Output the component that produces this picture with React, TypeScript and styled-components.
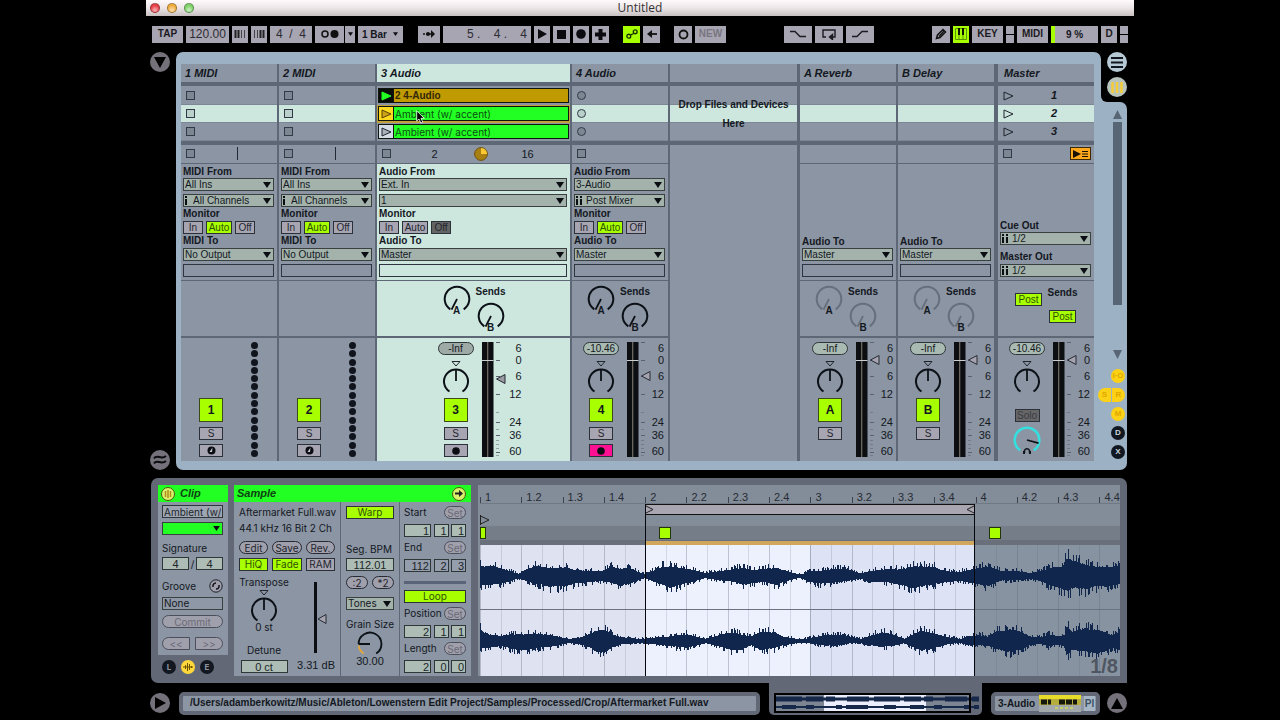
import React from 'react';
import styled, { createGlobalStyle } from 'styled-components';

const c = {
  ink: '#14181f',
  grey: '#8b95a3',
  line: '#5e6776',
  mint: '#cde7df',
  field: '#a3b2ab',
  button: '#a8a5b2',
  lime: '#a8ff00',
  green: '#22ff22',
  frame: '#9cb1c3',
  panel: '#626876',
  yellow: '#fdd116',
};

const Global = createGlobalStyle`
  * { box-sizing: border-box; }
  body { margin: 0; background: #000; color: ${c.ink}; font: 10px/12px "Liberation Sans", Arial, sans-serif; }
  button, input, select { font: inherit; color: inherit; margin: 0; padding: 0; border-radius: 0; }
  button { cursor: default; }
  svg { display: block; flex: none; }
`;

const Page = styled.div`
  min-height: 100vh;
  padding: 0 146px;
  overflow: hidden;
`;

/* ---------- title bar ---------- */
const TitleBar = styled.header`
  height: 16px;
  display: grid;
  grid-template-columns: 1fr auto 1fr;
  align-items: center;
  background: linear-gradient(#fffafb, #ece6e8 50%, #c6c0c1);
  font: 12px/14px "Open Sans", "Noto Sans", sans-serif;
  color: #333;
`;
const Lights = styled.div`
  display: flex;
  gap: 7px;
  padding-left: 4px;
`;
const Light = styled.button<{ $c: string }>`
  width: 10px;
  height: 10px;
  border-radius: 5px;
  border: 1px solid #0005;
  background: radial-gradient(circle at 50% 75%, #fff9, transparent 60%), ${(p) => p.$c};
`;

/* ---------- transport ---------- */
const Transport = styled.nav`
  display: flex;
  align-items: center;
  height: 36px;
  padding: 0 6px;
`;
const Group = styled.div<{ $gap?: number }>`
  display: flex;
  gap: 3px;
  margin-left: ${(p) => p.$gap ?? 0}px;
`;
const Spacer = styled.div`
  flex: 1;
`;
const TBtn = styled.button<{ $w: number; $on?: boolean; $dim?: boolean }>`
  width: ${(p) => p.$w}px;
  height: 17px;
  border: 0;
  display: flex;
  align-items: center;
  justify-content: center;
  background: ${(p) => (p.$on ? c.lime : c.button)};
  color: ${(p) => (p.$dim ? '#77757f' : '#1b1b22')};
  font-weight: bold;
`;
const TInput = styled.input<{ $w: number; $right?: boolean }>`
  width: ${(p) => p.$w}px;
  height: 17px;
  border: 0;
  background: ${c.button};
  color: #2b2b33;
  font-size: 12px;
  text-align: ${(p) => (p.$right ? 'right' : 'center')};
  padding-right: ${(p) => (p.$right ? 4 : 0)}px;
  white-space: pre;
`;
const TSelect = styled.label<{ $w: number }>`
  display: flex;
  align-items: center;
  width: ${(p) => p.$w}px;
  height: 17px;
  padding: 0 5px 0 4px;
  background: ${c.button};
  font-weight: bold;
`;
const BareSelect = styled.select`
  appearance: none;
  border: 0;
  background: transparent;
  flex: 1;
  min-width: 0;
  width: 0;
  height: 100%;
  line-height: 11px;
  outline: 0;
`;
const Split = styled.div`
  display: flex;
  gap: 1px;
`;
const MiniStack = styled.div`
  display: grid;
  gap: 1px;
  width: 8px;
  height: 17px;
`;
const MiniLed = styled.span`
  background: ${c.button};
`;
const Cpu = styled.div`
  display: flex;
  width: 47px;
  height: 17px;
  background: ${c.button};
  font-weight: bold;
`;
const CpuBar = styled.span`
  width: 4px;
  background: ${c.lime};
`;
const CpuText = styled.span`
  flex: 1;
  padding-right: 4px;
  text-align: center;
  line-height: 17px;
`;

/* ---------- session ---------- */
const Session = styled.main`
  display: flex;
  height: 418px;
  padding-right: 7px;
`;
const Gutter = styled.aside`
  width: 30px;
  padding: 0 0 0 4px;
  display: flex;
  flex-direction: column;
  justify-content: space-between;
`;
const RoundBtn = styled.button<{ $bg?: string }>`
  width: 20px;
  height: 20px;
  flex: none;
  border: 0;
  border-radius: 10px;
  background: ${(p) => p.$bg ?? '#74717a'};
  display: flex;
  align-items: center;
  justify-content: center;
`;
const Frame = styled.section`
  flex: 1;
  min-width: 0;
  background: ${c.frame};
  border-radius: 7px 7px 0 7px;
  padding: 12px 7px 9px 5px;
`;
const Tracks = styled.div`
  display: grid;
  grid-template-columns: 96px 96px 193px 96px 1fr 97px 96px 98px;
  gap: 2px;
  background: ${c.line};
  height: 397px;
`;
const Track = styled.section<{ $edge?: number }>`
  display: flex;
  flex-direction: column;
  position: relative;
  border-left: ${(p) => p.$edge ?? 0}px solid ${c.line};
  min-width: 0;
`;
const Header = styled.h2<{ $sel?: boolean; $pad?: number }>`
  margin: 0 0 4px;
  height: 18px;
  padding-left: ${(p) => p.$pad ?? 4}px;
  font: italic bold 11px/18px "Liberation Sans", sans-serif;
  background: ${(p) => (p.$sel ? c.mint : c.grey)};
`;
const Slots = styled.div`
  padding-top: 1px;
  height: 55px;
  background: ${c.grey};
  margin-bottom: 4px;
`;
const Slot = styled.div<{ $hot?: boolean }>`
  height: 18px;
  display: flex;
  align-items: center;
  padding-left: 5px;
  background: ${(p) => (p.$hot ? c.mint : c.grey)};
  border-bottom: 1px solid #7c8694;
`;
const StopBtn = styled.button<{ $round?: boolean; $after?: number }>`
  width: 9px;
  height: 9px;
  margin-right: ${(p) => p.$after ?? 0}px;
  border: 1px solid #333a47;
  background: #00000018;
  border-radius: ${(p) => (p.$round ? 5 : 0)}px;
`;
const ClipSlot = styled.div<{ $hot?: boolean }>`
  height: 18px;
  padding: 1px 1px 2px;
  display: flex;
  background: ${(p) => (p.$hot ? '#c2a03a' : c.grey)};
`;
const Launch = styled.button<{ $bg: string }>`
  width: 15px;
  border: 1px solid #10140f;
  border-right: 0;
  background: ${(p) => p.$bg};
  display: flex;
  align-items: center;
  justify-content: center;
`;
const ClipName = styled.button<{ $bg: string; $bold?: boolean }>`
  flex: 1;
  border: 1px solid #10140f;
  background: ${(p) => p.$bg};
  text-align: left;
  padding-left: 1px;
  line-height: 12px;
  font-family: ${(p) => (p.$bold ? 'inherit' : 'Inter, "Liberation Sans", sans-serif')};
  font-weight: ${(p) => (p.$bold ? 'bold' : 'normal')};
  color: ${(p) => (p.$bold ? '#33270a' : '#0b4d12')};
`;
const StopRow = styled.div`
  height: 18px;
  margin-bottom: 1px;
  padding: 0 3px 1px 5px;
  display: flex;
  align-items: center;
  background: ${c.grey};
  justify-content: space-between;
`;
const Playhead = styled.span`
  width: 1px;
  height: 13px;
  background: #222935;
  margin-right: 36px;
`;
const LoopCount = styled.span`
  width: 24px;
  text-align: center;
  font-size: 11px;
`;
const IO = styled.div<{ $sel?: boolean; $end?: boolean }>`
  height: 116px;
  margin-bottom: 1px;
  padding: 1px 3px 3px 2px;
  display: flex;
  flex-direction: column;
  justify-content: ${(p) => (p.$end ? 'flex-end' : 'flex-start')};
  background: ${(p) => (p.$sel ? c.mint : c.grey)};
`;
const IOLabel = styled.label`
  font-weight: bold;
  line-height: 14px;
  height: 14px;
  flex: none;
  &:first-child { height: 13px; }
`;
const SelectBox = styled.div<{ $gap?: number; $top?: number; $bg?: string }>`
  display: flex;
  align-items: center;
  height: 13px;
  flex: none;
  margin-top: ${(p) => p.$top ?? 0}px;
  margin-bottom: ${(p) => p.$gap ?? 0}px;
  padding: 0 2px 0 1px;
  border: 1px solid #39403f;
  background: ${(p) => p.$bg ?? c.field};
  gap: 4px;
`;
const Blank = styled.div`
  height: 13px;
  border: 1px solid #2e3440;
  flex: none;
`;
const Monitor = styled.div`
  display: flex;
  gap: 3px;
  height: 13px;
`;
const Toggle = styled.button<{ $w?: number; $on?: boolean; $bg?: string; $fg?: string }>`
  width: ${(p) => (p.$w ? p.$w + 'px' : '100%')};
  height: 13px;
  flex: none;
  border: 1px solid #2c3038;
  background: ${(p) => p.$bg ?? (p.$on ? c.lime : c.button)};
  color: ${(p) => p.$fg ?? (p.$on ? '#2f5200' : '#23262e')};
  line-height: 11px;
  display: flex;
  align-items: center;
  justify-content: center;
`;
const Sends = styled.div<{ $sel?: boolean }>`
  height: 55px;
  margin-bottom: 2px;
  background: ${(p) => (p.$sel ? c.mint : c.grey)};
`;
const SendGrid = styled.div<{ $wide?: boolean }>`
  width: 96px;
  margin: 0 auto;
  padding: 4px 0 0 ${(p) => (p.$wide ? 17 : 15)}px;
  display: flex;
  gap: 6px;
`;
const SendCol = styled.div`
  display: flex;
  flex-direction: column;
  align-items: center;
  gap: 4px;
  width: 28px;
`;
const SendTitle = styled.span`
  font-weight: bold;
  line-height: 13px;
`;
const KnobBox = styled.div`
  position: relative;
  width: 28px;
  height: 28px;
`;
const KnobLetter = styled.span`
  position: absolute;
  left: 0;
  right: 0;
  bottom: -4px;
  text-align: center;
  font-weight: bold;
`;
const PostGrid = styled.div`
  display: flex;
  padding: 5px 18px 0 0;
  justify-content: flex-end;
  gap: 7px;
`;
const PostCol = styled.div<{ $top: number }>`
  padding-top: ${(p) => p.$top}px;
  width: 27px;
  display: flex;
  flex-direction: column;
  gap: 11px;
  align-items: center;
`;
const Mixer = styled.div<{ $sel?: boolean }>`
  height: 123px;
  background: ${(p) => (p.$sel ? c.mint : c.grey)};
`;
const Strip = styled.div<{ $pad?: number }>`
  width: 96px;
  margin: 0 auto;
  padding: 4px 0 0 ${(p) => p.$pad ?? 11}px;
  display: flex;
`;
const StripLeft = styled.div`
  width: 36px;
  height: 115px;
  display: flex;
  flex-direction: column;
  align-items: center;
`;
const Pill = styled.output<{ $bg?: string }>`
  width: 36px;
  height: 13px;
  border: 1px solid #2e3638;
  border-radius: 7px;
  background: ${(p) => p.$bg ?? '#a9bab2'};
  line-height: 11px;
  text-align: center;
  margin-bottom: 5px;
  flex: none;
`;
const Activator = styled.button`
  width: 24px;
  height: 24px;
  margin: 4px 0 5px;
  flex: none;
  border: 1px solid #3c4a1a;
  background: ${c.lime};
  font-weight: bold;
  font-size: 12px;
`;
const Arm = styled(Toggle)`
  margin-top: 4px;
`;
const Solo = styled(Toggle)`
  margin: 15px 0 4px;
`;
const CueKnob = styled.div`
  position: relative;
`;
const Phones = styled.svg`
  position: absolute;
  left: 9px;
  bottom: 0;
`;
const Scale = styled.div<{ $wide?: boolean }>`
  display: grid;
  grid-template-rows: 12px 12px 16px 18px 28px 13px 16px;
  align-items: end;
  justify-items: end;
  width: ${(p) => (p.$wide ? 16 : 13)}px;
  font-size: 11px;
`;
const MeterGap = styled.div`
  width: 8px;
`;
const MidiLeft = styled(StripLeft)`
  padding-top: 52px;
`;
const Dots = styled.div`
  height: 115px;
  margin-left: 22px;
  display: flex;
  flex-direction: column;
  justify-content: space-between;
`;
const Dot = styled.i`
  width: 7px;
  height: 7px;
  border-radius: 4px;
  background: #10141c;
`;
const DropHint = styled.p`
  position: absolute;
  top: 31px;
  left: 0;
  right: 0;
  margin: 0;
  text-align: center;
  font-weight: bold;
  line-height: 19px;
`;
const DropBody = styled.div`
  flex: 1;
  background: ${c.grey};
`;
const SceneNo = styled.span`
  font: italic bold 11px/17px "Liberation Sans", sans-serif;
  margin: 0 auto;
`;
const BackBtn = styled.button`
  width: 21px;
  height: 13px;
  border: 1px solid #3d2a00;
  background: #ffa81c;
  display: flex;
  align-items: center;
  justify-content: center;
`;
const Cursor = styled.svg`
  position: absolute;
  left: 39px;
  top: 46px;
`;

/* ---------- right rail ---------- */
const Rail = styled.aside`
  width: 26px;
  display: flex;
  flex-direction: column;
`;
const NotchBack = styled.div`
  background: ${c.frame};
`;
const Notch = styled.div`
  height: 50px;
  background: #000;
  border-bottom-left-radius: 6px;
  display: flex;
  flex-direction: column;
  align-items: flex-end;
  gap: 5px;
`;
const RailBody = styled.div`
  flex: 1;
  background: ${c.frame};
  border-radius: 0 7px 7px 0;
  padding: 8px 2px 10px 0;
  display: flex;
  flex-direction: column;
  align-items: flex-end;
`;
const ScrollTrack = styled.div`
  height: 183px;
  width: 9px;
  margin: 3px 3px 45px 0;
  background: #586575;
`;
const ArrowCell = styled.div`
  width: 15px;
  display: flex;
  justify-content: center;
`;
const ShowBtns = styled.div`
  display: flex;
  flex-direction: column;
  align-items: flex-end;
  gap: 5px;
  margin-top: 10px;
`;
const ShowBtn = styled.button<{ $on?: boolean; $shape?: string }>`
  width: ${(p) => (p.$shape ? 13 : 14)}px;
  height: 14px;
  border: 0;
  border-radius: ${(p) => p.$shape ?? '7px'};
  background: ${(p) => (p.$on ? c.yellow : '#111821')};
  color: ${(p) => (p.$on ? '#e0a800' : '#c8d4de')};
  font-weight: bold;
  font-size: 8px;
  line-height: 14px;
  text-align: center;
  flex: none;
`;
const Pair = styled.div`
  display: flex;
  gap: 1px;
  margin-left: -4px;
`;

/* ---------- clip view ---------- */
const ClipView = styled.section`
  margin: 8px 7px 0 5px;
  height: 205px;
  padding: 7px;
  background: ${c.panel};
  border-radius: 7px 7px 0 7px;
  display: flex;
`;
const ClipCol = styled.div`
  width: 70px;
  margin-right: 6px;
  flex: none;
  font-family: Inter, "Liberation Sans", sans-serif;
`;
const GreenHead = styled.h2`
  margin: 0;
  height: 17px;
  padding: 0 5px 0 3px;
  display: flex;
  align-items: center;
  gap: 5px;
  background: ${c.green};
  color: #0c4413;
  font: italic bold 11px/17px "Liberation Sans", sans-serif;
`;
const HeadBtn = styled.button<{ $right?: boolean }>`
  width: 14px;
  height: 14px;
  border: 1px solid #4a5a10;
  border-radius: 7px;
  background: #d9f06a;
  margin-left: ${(p) => (p.$right ? 'auto' : '0')};
  display: flex;
  align-items: center;
  justify-content: center;
`;
const ClipBody = styled.div`
  height: 153px;
  padding: 3px 5px 0 4px;
  background: ${c.grey};
`;
const Stack = styled.div<{ $t?: number }>`
  display: flex;
  align-items: center;
  justify-content: space-between;
  margin-top: ${(p) => p.$t ?? 0}px;
`;
const Box = styled.input<{ $w?: number; $bg?: string; $align?: string }>`
  width: ${(p) => (p.$w ? p.$w + 'px' : '100%')};
  height: 13px;
  display: block;
  border: 1px solid #2e3638;
  background: ${(p) => p.$bg ?? '#adbdb5'};
  color: #20252a;
  text-align: ${(p) => p.$align ?? 'center'};
  padding: 0 1px;
  line-height: 11px;
`;
const NumBox = styled(Box)`
  font-family: "Liberation Sans", sans-serif;
  font-size: 11px;
`;
const Text = styled.label<{ $h?: number; $t?: number }>`
  display: block;
  line-height: ${(p) => p.$h ?? 13}px;
  margin-top: ${(p) => p.$t ?? 0}px;
  white-space: nowrap;
`;
const NumText = styled(Text)`
  font-family: "Liberation Sans", sans-serif;
  font-size: 11px;
`;
const PillBtn = styled.button<{ $w?: number; $dim?: boolean; $r?: string }>`
  width: ${(p) => (p.$w ? p.$w + 'px' : '100%')};
  height: 13px;
  flex: none;
  border: 1px solid ${(p) => (p.$dim ? '#4c4f5b' : '#262a33')};
  border-radius: ${(p) => p.$r ?? '7px'};
  background: #a09fac;
  color: ${(p) => (p.$dim ? '#6a6a76' : '#22252d')};
  line-height: 10px;
  text-align: center;
`;
const Tabs = styled.div`
  display: flex;
  gap: 5px;
  padding: 5px 0 0 4px;
`;
const Tab = styled.button<{ $on?: boolean }>`
  width: 14px;
  height: 14px;
  border: 0;
  border-radius: 7px;
  background: ${(p) => (p.$on ? '#ffd83a' : '#13171f')};
  color: #8e95a2;
  font-weight: bold;
  font-size: 8px;
  line-height: 14px;
  display: flex;
  align-items: center;
  justify-content: center;
`;
const SampleCol = styled.div`
  width: 237px;
  margin-right: 7px;
  flex: none;
  font-family: Inter, "Liberation Sans", sans-serif;
`;
const SampleBody = styled.div`
  height: 174px;
  display: grid;
  grid-template-columns: 106px 58px 1fr;
  gap: 1px;
  background: ${c.line};
`;
const Pane = styled.div<{ $p: string }>`
  background: ${c.grey};
  padding: ${(p) => p.$p};
  min-width: 0;
`;
const PitchRow = styled.div`
  display: flex;
  justify-content: space-between;
`;
const PitchCol = styled.div`
  width: 50px;
  display: flex;
  flex-direction: column;
  align-items: center;
`;
const GainCol = styled(PitchCol)`
  width: 40px;
  padding-top: 11px;
  align-items: flex-end;
`;
const Rule = styled.hr`
  margin: 9px 0 6px;
  height: 3px;
  border: 0;
  background: #596479;
`;
const Center = styled.div`
  display: flex;
  flex-direction: column;
  align-items: center;
`;

/* ---------- waveform display ---------- */
const Wave = styled.div`
  position: relative;
  flex: 1;
  min-width: 0;
  background: #838d99;
  padding-left: 2px;
  display: flex;
  flex-direction: column;
`;
const Ruler = styled.div`
  height: 19px;
  display: flex;
  border-bottom: 1px solid #6f7883;
  font-size: 11px;
`;
const Beat = styled.div<{ $half?: boolean }>`
  flex: ${(p) => (p.$half ? 1 : 2)} 0 0;
  min-width: 0;
  display: flex;
  gap: 4px;
  align-items: flex-end;
  color: #262b33;
`;
const Tick = styled.i`
  width: 1px;
  height: 6px;
  background: #3c434e;
`;
const Lane = styled.div<{ $h: number; $bg?: string }>`
  height: ${(p) => p.$h}px;
  display: grid;
  grid-template-columns: repeat(31, 1fr);
  background: ${(p) => p.$bg ?? 'transparent'};
`;
const Brace = styled.div`
  grid-column: 9 / 25;
  display: flex;
  align-items: center;
  justify-content: space-between;
  border: solid #111;
  border-width: 1px 0;
  background: #a9a6b2;
`;
const Orange = styled.div`
  grid-column: 9 / 25;
  background: #d0a75c;
  height: 4px;
  margin-top: 1px;
`;
const Marker = styled.i<{ $col: number; $cut?: boolean }>`
  grid-column: ${(p) => p.$col} / span 2;
  width: ${(p) => (p.$cut ? 6 : 12)}px;
  margin-left: ${(p) => (p.$cut ? 0 : 14)}px;
  height: 12px;
  margin-top: 1px;
  border: 1px solid #24340a;
  background: ${c.lime};
`;
const Overlay = styled.div`
  position: absolute;
  inset: 19px 0 0 2px;
  display: grid;
  grid-template-columns: repeat(31, 1fr);
  pointer-events: none;
`;
const LoopEdges = styled.div`
  grid-column: 9 / 25;
  border: solid #05070c;
  border-width: 0 1px;
`;
const GridText = styled.span`
  position: absolute;
  right: 2px;
  bottom: 0;
  font: bold 20px/20px "Liberation Sans", sans-serif;
  color: #4f5661;
`;
const WaveSvg = styled.svg`
  width: 100%;
  height: 131px;
`;

/* ---------- status bar ---------- */
const Status = styled.footer`
  display: flex;
  height: 32px;
  padding: 0 7px 0 4px;
`;
const Lowered = styled.div`
  padding-top: 10px;
`;
const PathBox = styled.div`
  flex: 1;
  min-width: 0;
  height: 23px;
  margin: 9px 9px 0;
  border: 4px solid ${c.panel};
  border-radius: 5px;
  background: ${c.grey};
  padding-left: 7px;
  font-weight: bold;
  line-height: 14px;
  white-space: nowrap;
  overflow: hidden;
`;
const OverviewTab = styled.div`
  width: 213px;
  background: ${c.panel};
  border-radius: 0 0 5px 5px;
  padding: 10px 3px 0 5px;
`;
const DeviceTab = styled.div`
  width: 109px;
  height: 23px;
  margin: 9px 7px 0 9px;
  border: 4px solid ${c.panel};
  border-radius: 5px;
  background: ${c.grey};
  display: flex;
  align-items: center;
  justify-content: space-between;
  padding: 0 1px 0 3px;
  font-weight: bold;
`;
const Plug = styled.span`
  width: 11px;
  height: 15px;
  line-height: 15px;
  text-align: center;
  background: #a6b6c4;
  color: #3c5064;
`;

/* ---------- small drawings ---------- */
const Down = ({ w = 8, h = 6, fill = '#0a0d12' }) => (
  <svg width={w} height={h} viewBox="0 0 8 6" aria-hidden="true">
    <path d="M0 0H8L4 6Z" fill={fill} />
  </svg>
);

const at = (deg: number, r: number) => {
  const a = (deg * Math.PI) / 180;
  return `${(14 + r * Math.sin(a)).toFixed(2)} ${(14 - r * Math.cos(a)).toFixed(2)}`;
};

function Knob({ angle = 0, color = '#0c1117', letter, arc }: { angle?: number; color?: string; letter?: string; arc?: string }) {
  return (
    <KnobBox>
      <svg width="28" height="28" viewBox="0 0 28 28">
        <path d={`M${at(213, 12.3)}A12.3 12.3 0 1 1 ${at(147, 12.3)}`} fill="none" stroke={arc ?? color} strokeWidth={arc ? 2.5 : 2} />
        <path d={`M14 14L${at(angle, 12)}`} stroke={color} strokeWidth="1.8" />
      </svg>
      {letter && <KnobLetter>{letter}</KnobLetter>}
    </KnobBox>
  );
}

const PanKnob = () => (
  <svg width="28" height="34" viewBox="0 0 28 34">
    <path d="M10 1.5H18L14 6Z" fill="none" stroke="#20252e" />
    <path d="M7.5 31.5A12 12 0 1 1 20.5 31.5" fill="none" stroke="#0c1117" strokeWidth="2" />
    <path d="M14 21V9" stroke="#0c1117" strokeWidth="1.8" />
  </svg>
);

const Meter = ({ fader, filled }: { fader: number; filled?: boolean }) => (
  <svg width="24" height="115" viewBox="0 0 24 115">
    <rect x="0" width="11.5" height="115" fill="#0d0e12" />
    <path d="M5.75 0V115" stroke="#8b8577" />
    <path d="M0 18.5H11.5" stroke="#c9cfd2" />
    <g stroke="#5a626e">
      {[0.5, 18.5, 34.5, 52.5, 80.5, 93.5, 110.5].map((y) => <path key={y} d={`M14 ${y}h4`} />)}
    </g>
    <g stroke="#5a626e" opacity="0.5">
      {[70, 87, 98, 102, 106, 113].map((y) => <path key={y} d={`M14 ${y + 0.5}h3`} />)}
    </g>
    <path d={`M23 ${fader - 4.5}V${fader + 4.5}L14.5 ${fader}Z`} fill={filled ? '#9a9aa2' : '#a6a3b0'} stroke="#262a33" />
  </svg>
);

const PlayTri = ({ fill = 'none', stroke = '#20252e' }) => (
  <svg width="11" height="10" viewBox="0 0 11 10">
    <path d="M1 1L10 5L1 9Z" fill={fill} stroke={stroke} />
  </svg>
);

const Channels = ({ two }: { two?: boolean }) => (
  <svg width={two ? 6 : 4} height="9" viewBox={two ? '0 0 6 9' : '0 0 4 9'}>
    <path d="M1 0V2M1 3V9" stroke="#0a0d12" strokeWidth="2" />
    {two && <path d="M5 0V2M5 3V9" stroke="#0a0d12" strokeWidth="2" />}
  </svg>
);

/* ---------- composed parts ---------- */
const slug = (s: string) => s.toLowerCase().replace(/[^a-z0-9]+/g, '-');

function Field({ track, label, value, gap, icon, showLabel = true }: { track: string; label: string; value: string; gap?: number; icon?: React.ReactNode; showLabel?: boolean }) {
  const id = slug(`${track}-${label}`);
  return (
    <>
      {showLabel && <IOLabel htmlFor={id}>{label}</IOLabel>}
      <SelectBox $gap={gap}>
        {icon}
        <BareSelect id={id} aria-label={showLabel ? undefined : label} defaultValue={value}>
          <option>{value}</option>
        </BareSelect>
        <Down />
      </SelectBox>
    </>
  );
}

const MonitorRow = ({ off }: { off?: boolean }) => (
  <Monitor>
    <Toggle $w={20}>In</Toggle>
    <Toggle $w={26} $on={!off}>Auto</Toggle>
    <Toggle $w={20} $bg={off ? '#646464' : undefined}>Off</Toggle>
  </Monitor>
);

const SendKnobs = ({ dim, wide }: { dim?: boolean; wide?: boolean }) => {
  const color = dim ? '#666f7c' : '#0c1117';
  return (
    <SendGrid $wide={wide}>
      <SendCol><Knob angle={207} color={color} letter="A" /></SendCol>
      <SendCol>
        <SendTitle>Sends</SendTitle>
        <Knob angle={207} color={color} letter="B" />
      </SendCol>
    </SendGrid>
  );
};

const ScaleLabels = ({ wide }: { wide?: boolean }) => (
  <Scale $wide={wide}>
    {['6', '0', '6', '12', '24', '36', '60'].map((v, i) => <span key={i}>{v}</span>)}
  </Scale>
);

function AudioStrip({ name, vol, fader, sel, arm, ret }: { name: string; vol: string; fader: number; sel?: boolean; arm?: string; ret?: boolean }) {
  return (
    <Mixer $sel={sel}>
      <Strip $pad={sel || ret ? 12 : 11}>
        <StripLeft>
          <Pill $bg={sel ? '#9eaaa5' : undefined}>{vol}</Pill>
          <PanKnob />
          <Activator>{name}</Activator>
          <Toggle $w={24}>S</Toggle>
          {!ret && (
            <Arm $w={24} $bg={arm} aria-label="Arm">
              <svg width="8" height="8"><circle cx="4" cy="4" r="3.8" fill="#0a0d12" /></svg>
            </Arm>
          )}
        </StripLeft>
        <MeterGap />
        <Meter fader={fader} filled={sel} />
        <ScaleLabels wide={sel} />
      </Strip>
    </Mixer>
  );
}

function MidiTrack({ n }: { n: string }) {
  const t = `midi-${n}`;
  return (
    <Track>
      <Header>{n} MIDI</Header>
      <Slots>
        {[0, 1, 2].map((i) => <Slot key={i} $hot={i === 1}><StopBtn aria-label="Stop slot" /></Slot>)}
      </Slots>
      <StopRow><StopBtn aria-label="Stop track" /><Playhead /></StopRow>
      <IO>
        <Field track={t} label="MIDI From" value="All Ins" gap={3} />
        <Field track={t} label="Input Channel" value="All Channels" icon={<Channels />} showLabel={false} />
        <IOLabel as="span">Monitor</IOLabel>
        <MonitorRow />
        <Field track={t} label="MIDI To" value="No Output" gap={3} />
        <Blank />
      </IO>
      <Sends />
      <Mixer>
        <Strip $pad={12}>
          <MidiLeft>
            <Activator>{n}</Activator>
            <Toggle $w={24}>S</Toggle>
            <Arm $w={24} aria-label="Arm">
              <svg width="9" height="9" viewBox="0 0 9 9">
                <circle cx="4.5" cy="4.5" r="4" fill="#0a0d12" />
                <path d="M5.5 1.5L2.5 6H5Z" fill="#c9c7d2" />
              </svg>
            </Arm>
          </MidiLeft>
          <Dots>{Array.from({ length: 14 }, (_, i) => <Dot key={i} />)}</Dots>
        </Strip>
      </Mixer>
    </Track>
  );
}

function ReturnTrack({ name, letter, edge }: { name: string; letter: string; edge?: number }) {
  return (
    <Track $edge={edge}>
      <Header>{name}</Header>
      <Slots>{[0, 1, 2].map((i) => <Slot key={i} $hot={i === 1} />)}</Slots>
      <StopRow />
      <IO $end>
        <Field track={name} label="Audio To" value="Master" gap={3} />
        <Blank />
      </IO>
      <Sends><SendKnobs dim /></Sends>
      <AudioStrip name={letter} vol="-Inf" fader={18} ret />
    </Track>
  );
}

/* ---------- waveform data: [x, up, down] envelope points ---------- */
type Env = [number, number, number][];
const upper: Env = [[0,13,12],[12,14,12],[24,9,9],[38,3,3],[46,9,7],[57,14,11],[70,10,14],[85,12,14],[96,8,10],[110,7,8],[120,6,7],[130,12,9],[140,10,13],[149,11,11],[157,6,6],[164,3,3],[172,7,7],[182,12,12],[190,13,16],[204,10,10],[214,8,7],[225,4,3],[240,7,6],[256,10,8],[263,11,12],[272,8,10],[284,10,8],[296,11,12],[306,7,7],[320,2,2],[328,6,8],[340,7,10],[358,10,8],[370,8,6],[379,3,3],[390,7,8],[405,9,8],[420,9,12],[434,13,16],[454,12,11],[464,7,9],[478,5,6],[490,9,9],[508,13,14],[520,7,6],[535,7,6],[550,4,4],[560,7,7],[573,12,14],[582,12,17],[586,24,20],[594,20,16],[605,15,18],[615,13,14],[628,12,14],[639,13,11]];
const lower: Env = [[0,15,10],[8,9,9],[20,7,7],[34,9,11],[42,9,13],[58,10,9],[74,7,7],[87,3,3],[98,4,4],[108,9,8],[116,14,14],[124,15,16],[132,9,9],[142,5,4],[158,3,3],[172,4,4],[188,6,7],[206,9,9],[216,6,6],[226,3,3],[238,8,7],[252,12,12],[262,8,12],[270,6,5],[279,12,12],[294,12,10],[302,6,6],[312,4,4],[320,2,2],[333,5,4],[346,8,6],[358,8,6],[370,6,3],[380,3,3],[392,8,6],[402,12,8],[414,8,6],[424,3,3],[434,10,9],[440,14,13],[454,10,10],[468,5,4],[480,3,3],[490,7,6],[500,8,6],[508,6,7],[516,13,11],[530,15,15],[540,13,12],[550,6,5],[560,5,4],[568,9,7],[580,6,5],[584,8,7],[586,20,19],[592,12,12],[604,17,14],[618,15,17],[626,11,13],[632,8,10],[639,12,12]];

function wavePath(env: Env, mid: number) {
  let d = '';
  let k = 0;
  let seed = 7;
  const rnd = () => (seed = (seed * 16807) % 2147483647) / 2147483647;
  for (let x = 0; x < 640; x++) {
    while (k < env.length - 2 && env[k + 1][0] <= x) k++;
    const [x0, u0, d0] = env[k];
    const [x1, u1, d1] = env[k + 1];
    const t = Math.min(1, (x - x0) / (x1 - x0));
    const f = () => (rnd() < 0.36 ? 0.9 + rnd() * 0.32 : 0.7 + rnd() * 0.08);
    const up = Math.round((u0 + (u1 - u0) * t) * f());
    const dn = Math.round((d0 + (d1 - d0) * t) * f());
    d += `M${x + 0.5} ${mid - up}V${mid + dn}`;
  }
  return d;
}
const paths = [wavePath(upper, 31), wavePath(lower, 96)];

const B = 640 / 31;
const WaveForm = () => (
  <WaveSvg viewBox="0 0 640 131" preserveAspectRatio="none" role="img" aria-label="Sample waveform">
    <rect width={8 * B} height="131" fill="#dfe2f1" />
    <rect x={8 * B} width={8 * B} height="131" fill="#edf1fe" />
    <rect x={16 * B} width={8 * B} height="131" fill="#dde2f4" />
    <rect x={24 * B} width={7 * B} height="131" fill="#8793a0" />
    {Array.from({ length: 31 }, (_, i) => (
      <path key={i} d={`M${Math.round(i * B) + 0.5} 0V131`} stroke="#5a6478" opacity={i % 2 ? 0.18 : 0.32} />
    ))}
    <path d="M0 64.5H640" stroke="#6b7280" />
    {paths.map((d, i) => <path key={i} d={d} stroke="#10264c" fill="none" />)}
  </WaveSvg>
);

const beats = ['1', '1.2', '1.3', '1.4', '2', '2.2', '2.3', '2.4', '3', '3.2', '3.3', '3.4', '4', '4.2', '4.3', '4.4'];

const Nums = ({ label, v, bg }: { label: string; v: string[]; bg?: string }) => (
  <Stack $t={5}>
    {v.map((n, i) => (
      <NumBox key={i} aria-label={`${label} ${i + 1}`} $w={i ? 15 : 27} $align="right" $bg={bg} defaultValue={n} />
    ))}
  </Stack>
);
const SetRow = ({ label, t }: { label: string; t?: number }) => (
  <Stack $t={t}><Text as="span">{label}</Text><PillBtn $w={22} $dim>Set</PillBtn></Stack>
);

export default function App() {
  return (
    <Page>
      <Global />
      <TitleBar>
        <Lights>
          <Light $c="#e8434a" aria-label="Close" />
          <Light $c="#f0ad3f" aria-label="Minimize" />
          <Light $c="#7fd36a" aria-label="Zoom" />
        </Lights>
        <span>Untitled</span>
      </TitleBar>

      <Transport>
        <Group>
          <TBtn $w={31}>TAP</TBtn>
          <TInput $w={43} aria-label="Tempo" defaultValue="120.00" />
          <TBtn $w={16} aria-label="Nudge down">
            <svg width="12" height="8"><path d="M1.5 0V8M4.5 0V8" stroke="#222" strokeWidth="2" /><path d="M7.5 0V8M10.5 0V8" stroke="#444" /></svg>
          </TBtn>
          <TBtn $w={16} aria-label="Nudge up">
            <svg width="12" height="8"><path d="M1.5 0V8M4.5 0V8" stroke="#444" /><path d="M7.5 0V8M10.5 0V8" stroke="#222" strokeWidth="2" /></svg>
          </TBtn>
          <TInput $w={42} aria-label="Time signature" defaultValue="4  /  4" />
          <Split>
            <TBtn $w={29} aria-label="Metronome">
              <svg width="18" height="8"><circle cx="4" cy="4" r="3" fill="none" stroke="#111" strokeWidth="1.5" /><circle cx="13.5" cy="4" r="4" fill="#111" /></svg>
            </TBtn>
            <TBtn $w={10} aria-label="Metronome options"><Down w={5} h={4} /></TBtn>
          </Split>
          <TSelect $w={45}>
            <BareSelect aria-label="Quantization" defaultValue="1 Bar"><option>1 Bar</option></BareSelect>
            <Down w={5} h={4} />
          </TSelect>
        </Group>
        <Group $gap={15}>
          <TBtn $w={22} aria-label="Follow">
            <svg width="12" height="8"><path d="M0 4H2M3 4H8" stroke="#111" strokeWidth="1.5" /><path d="M8 0L12 4L8 8Z" fill="#111" /><circle cx="5" cy="4" r="2" fill="#111" /></svg>
          </TBtn>
          <TInput $w={88} $right aria-label="Position" defaultValue="5 .    4 .    4" />
          <TBtn $w={16} aria-label="Play"><svg width="10" height="10"><path d="M1 0L10 5L1 10Z" fill="#0a0a0f" /></svg></TBtn>
          <TBtn $w={17} aria-label="Stop"><svg width="9" height="9"><path d="M0 0H9V9H0Z" fill="#0a0a0f" /></svg></TBtn>
          <TBtn $w={16} aria-label="Record"><svg width="10" height="10"><circle cx="5" cy="5" r="4.8" fill="#0a0a0f" /></svg></TBtn>
          <TBtn $w={17} aria-label="Overdub"><svg width="11" height="11"><path d="M5.5 0V11M0 5.5H11" stroke="#0a0a0f" strokeWidth="4" /></svg></TBtn>
        </Group>
        <Group $gap={14}>
          <TBtn $w={17} $on aria-label="Automation arm">
            <svg width="12" height="10" fill="none" stroke="#1e3300" strokeWidth="1.4"><circle cx="2.8" cy="7.2" r="1.9" /><circle cx="9.2" cy="2.8" r="1.9" /><path d="M4.4 6.2C6 4 6 7 7.6 4" /></svg>
          </TBtn>
          <TBtn $w={17} aria-label="Re-enable automation">
            <svg width="10" height="8"><path d="M10 4H3" stroke="#111" strokeWidth="1.8" /><path d="M5 0L0 4L5 8Z" fill="#111" /></svg>
          </TBtn>
        </Group>
        <Group $gap={14}>
          <TBtn $w={18} aria-label="Session record"><svg width="11" height="11"><circle cx="5.5" cy="5.5" r="4" fill="none" stroke="#111" strokeWidth="1.8" /></svg></TBtn>
          <TBtn $w={31} $dim>NEW</TBtn>
        </Group>
        <Spacer />
        <Group>
          <TBtn $w={28} aria-label="Punch in"><svg width="16" height="8" fill="none" stroke="#1b1b22" strokeWidth="1.4"><path d="M0 1.5H5L10 6.5H16" /></svg></TBtn>
          <TBtn $w={28} aria-label="Loop"><svg width="14" height="11" fill="none" stroke="#1b1b22" strokeWidth="1.4"><path d="M4 8H1V1H13V8H9" /><path d="M10.5 5.5L7.5 8L10.5 10.5Z" fill="#1b1b22" /></svg></TBtn>
          <TBtn $w={28} aria-label="Punch out"><svg width="16" height="8" fill="none" stroke="#1b1b22" strokeWidth="1.4"><path d="M0 6.5H5L10 1.5H16" /></svg></TBtn>
        </Group>
        <Spacer />
        <Group>
          <TBtn $w={18} aria-label="Draw mode">
            <svg width="12" height="12" fill="none" stroke="#111" strokeWidth="1.5"><path d="M1.5 10.5L2.5 7L8 1.5L10.5 4L5 9.5Z" /><path d="M4 8.5L9 3" /></svg>
          </TBtn>
          <TBtn $w={16} $on aria-label="Computer MIDI keyboard">
            <svg width="12" height="12"><path d="M.5 .5H11.5V11.5H.5ZM4 7V12M8 7V12" fill="none" stroke="#5c9400" /><path d="M4 0V7M8 0V7" stroke="#0d1500" strokeWidth="2" /></svg>
          </TBtn>
          <TBtn $w={31}>KEY</TBtn>
          <MiniStack><MiniLed /><MiniLed /></MiniStack>
          <TBtn $w={31}>MIDI</TBtn>
          <Cpu><CpuBar /><CpuText>9 %</CpuText></Cpu>
          <TBtn $w={16}>D</TBtn>
          <MiniStack><MiniLed /><MiniLed /></MiniStack>
        </Group>
      </Transport>

      <Session>
        <Gutter>
          <RoundBtn aria-label="Show browser"><svg width="12" height="11"><path d="M0 0H12L6 11Z" fill="#000" /></svg></RoundBtn>
          <RoundBtn aria-label="Groove pool">
            <svg width="14" height="12" fill="none" stroke="#0a0c10" strokeWidth="2"><path d="M1 4.5C4 -.5 8 6.5 13 2M1 9.5C4 4.5 8 11.5 13 7" /></svg>
          </RoundBtn>
        </Gutter>
        <Frame>
          <Tracks>
            <MidiTrack n="1" />
            <MidiTrack n="2" />
            <Track>
              <Header $sel>3 Audio</Header>
              <Slots>
                <ClipSlot>
                  <Launch $bg="#0a0d08" aria-label="Launch"><PlayTri fill="#22ff22" stroke="#22ff22" /></Launch>
                  <ClipName $bg="#bf9a00" $bold>2 4-Audio</ClipName>
                </ClipSlot>
                <ClipSlot $hot>
                  <Launch $bg="#ffd820" aria-label="Launch"><PlayTri fill="#c9a21a" stroke="#5a4300" /></Launch>
                  <ClipName $bg={c.green}>Ambient (w/ accent)</ClipName>
                </ClipSlot>
                <ClipSlot>
                  <Launch $bg="#d4dde6" aria-label="Launch"><PlayTri fill="#a9b0ba" /></Launch>
                  <ClipName $bg={c.green}>Ambient (w/ accent)</ClipName>
                </ClipSlot>
              </Slots>
              <StopRow>
                <StopBtn $after={4} aria-label="Stop track" />
                <LoopCount>2</LoopCount>
                <svg width="14" height="14" viewBox="0 0 14 14"><circle cx="7" cy="7" r="6.4" fill="#a87f12" stroke="#6e5310" /><path d="M7 7V1A6 6 0 0 1 13 7Z" fill="#ffc933" /></svg>
                <LoopCount>16</LoopCount>
                <span />
              </StopRow>
              <IO $sel>
                <Field track="t3" label="Audio From" value="Ext. In" gap={3} />
                <Field track="t3" label="Input Channel" value="1" showLabel={false} />
                <IOLabel as="span">Monitor</IOLabel>
                <MonitorRow off />
                <Field track="t3" label="Audio To" value="Master" gap={3} />
                <Blank />
              </IO>
              <Sends $sel><SendKnobs wide /></Sends>
              <AudioStrip name="3" vol="-Inf" fader={37} sel />
              <Cursor width="9" height="14" viewBox="0 0 9 14"><path d="M.7 .8V11L3 9L4.8 13L6.8 12.2L5 8.3H8.3Z" fill="#000" stroke="#fff" strokeWidth=".8" /></Cursor>
            </Track>
            <Track>
              <Header>4 Audio</Header>
              <Slots>
                {[0, 1, 2].map((i) => <Slot key={i} $hot={i === 1}><StopBtn $round aria-label="Record slot" /></Slot>)}
              </Slots>
              <StopRow><StopBtn aria-label="Stop track" /></StopRow>
              <IO>
                <Field track="t4" label="Audio From" value="3-Audio" gap={3} />
                <Field track="t4" label="Input Channel" value="Post Mixer" icon={<Channels two />} showLabel={false} />
                <IOLabel as="span">Monitor</IOLabel>
                <MonitorRow />
                <Field track="t4" label="Audio To" value="Master" gap={3} />
                <Blank />
              </IO>
              <Sends><SendKnobs /></Sends>
              <AudioStrip name="4" vol="-10.46" fader={34} arm="#ff0f92" />
            </Track>
            <Track>
              <Header />
              <Slots>{[0, 1, 2].map((i) => <Slot key={i} $hot={i === 1} />)}</Slots>
              <DropBody />
              <DropHint>Drop Files and Devices<br />Here</DropHint>
            </Track>
            <ReturnTrack name="A Reverb" letter="A" edge={1} />
            <ReturnTrack name="B Delay" letter="B" />
            <Track $edge={2}>
              <Header $pad={6}>Master</Header>
              <Slots>
                {[1, 2, 3].map((n) => (
                  <Slot key={n} $hot={n === 2}><PlayTri /><SceneNo>{n}</SceneNo></Slot>
                ))}
              </Slots>
              <StopRow>
                <StopBtn aria-label="Stop all clips" />
                <BackBtn aria-label="Back to arrangement">
                  <svg width="15" height="8"><path d="M0 0L8 4L0 8Z" fill="#1a1200" /><path d="M9 1.5H15M9 4H15M9 6.5H15" stroke="#1a1200" /></svg>
                </BackBtn>
              </StopRow>
              <IO $end>
                <Field track="master" label="Cue Out" value="1/2" gap={5} icon={<Channels two />} />
                <Field track="master" label="Master Out" value="1/2" icon={<Channels two />} />
              </IO>
              <Sends>
                <PostGrid>
                  <PostCol $top={7}><Toggle $w={27} $on>Post</Toggle></PostCol>
                  <PostCol $top={0}><SendTitle>Sends</SendTitle><Toggle $w={27} $on>Post</Toggle></PostCol>
                </PostGrid>
              </Sends>
              <Mixer>
                <Strip>
                  <StripLeft>
                    <Pill>-10.46</Pill>
                    <PanKnob />
                    <Solo $w={25} $bg="#666668" $fg="#3a3d42">Solo</Solo>
                    <CueKnob>
                      <Knob angle={105} arc="#35dfe0" />
                      <Phones width="10" height="8" viewBox="0 0 10 8"><path d="M2.5 7V4.5A2.8 3.2 0 0 1 7.5 4.5V7" fill="none" stroke="#10151c" strokeWidth="1.5" /><path d="M1 5H3V8H1ZM7 5H9V8H7Z" fill="#10151c" /></Phones>
                    </CueKnob>
                  </StripLeft>
                  <MeterGap />
                  <Meter fader={18} />
                  <ScaleLabels />
                </Strip>
              </Mixer>
            </Track>
          </Tracks>
        </Frame>
        <Rail>
          <NotchBack>
            <Notch>
              <RoundBtn $bg="#b7c9d4" aria-label="Arrangement view"><svg width="12" height="11"><path d="M0 1H12M0 5.5H12M0 10H12" stroke="#10161e" strokeWidth="2" /></svg></RoundBtn>
              <RoundBtn $bg="#b9c4bd" aria-label="Session view"><svg width="12" height="11"><path d="M1.5 0V11M6 0V11M10.5 0V11" stroke="#f5cd3a" strokeWidth="2.5" /></svg></RoundBtn>
            </Notch>
          </NotchBack>
          <RailBody>
            <ArrowCell><svg width="9" height="9"><path d="M0 9L4.5 0L9 9Z" fill="#586575" /></svg></ArrowCell>
            <ScrollTrack />
            <ArrowCell><svg width="9" height="9"><path d="M0 0L4.5 9L9 0Z" fill="#586575" /></svg></ArrowCell>
            <ShowBtns>
              <ShowBtn $on>I·O</ShowBtn>
              <Pair><ShowBtn $on $shape="7px 0 0 7px">S</ShowBtn><ShowBtn $on $shape="0 7px 7px 0">R</ShowBtn></Pair>
              <ShowBtn $on>M</ShowBtn>
              <ShowBtn>D</ShowBtn>
              <ShowBtn>X</ShowBtn>
            </ShowBtns>
          </RailBody>
        </Rail>
      </Session>

      <ClipView>
        <ClipCol>
          <GreenHead>
            <HeadBtn aria-label="Clip activator"><svg width="8" height="8"><path d="M4 0V8M1.5 1V7M6.5 1V7" stroke="#b58a1e" strokeWidth="1.5" /></svg></HeadBtn>
            Clip
          </GreenHead>
          <ClipBody>
            <Box aria-label="Clip name" $align="left" $bg="#9ea5b3" defaultValue="Ambient (w/" />
            <SelectBox $top={4} $bg={c.green}>
              <BareSelect aria-label="Clip colour" defaultValue=""><option value=""></option></BareSelect>
              <Down w={7} h={5} />
            </SelectBox>
            <Text as="span" $t={7}>Signature</Text>
            <Stack $t={2}>
              <NumBox $w={27} aria-label="Signature numerator" defaultValue="4" />
              <span>/</span>
              <NumBox $w={27} aria-label="Signature denominator" defaultValue="4" />
            </Stack>
            <Stack $t={9}>
              <Text htmlFor="groove">Groove</Text>
              <svg width="14" height="14" viewBox="0 0 14 14"><circle cx="7" cy="7" r="6.2" fill="#a09fac" stroke="#1c2028" /><path d="M4 8V6A3 3 0 0 1 7 4M10 6V8A3 3 0 0 1 7 10" fill="none" stroke="#10141b" strokeWidth="1.5" /></svg>
            </Stack>
            <SelectBox $top={4} $bg="#8f98a6">
              <BareSelect id="groove" defaultValue="None"><option>None</option></BareSelect>
            </SelectBox>
            <Stack $t={5}><PillBtn $dim>Commit</PillBtn></Stack>
            <Stack $t={9}>
              <PillBtn $w={28} $dim $r="7px 0 0 7px">&lt;&lt;</PillBtn>
              <PillBtn $w={28} $dim $r="0 7px 7px 0">&gt;&gt;</PillBtn>
            </Stack>
          </ClipBody>
          <Tabs>
            <Tab>L</Tab>
            <Tab $on aria-label="Sample box"><svg width="10" height="8"><path d="M0 4H10M2.5 2V6M4.5 0V8M6.5 1V7M8.5 3V5" stroke="#6b5200" /></svg></Tab>
            <Tab>E</Tab>
          </Tabs>
        </ClipCol>

        <SampleCol>
          <GreenHead>
            Sample
            <HeadBtn $right aria-label="Edit sample"><svg width="8" height="7"><path d="M0 3.5H5" stroke="#222" strokeWidth="2" /><path d="M4 0L8 3.5L4 7Z" fill="#222" /></svg></HeadBtn>
          </GreenHead>
          <SampleBody>
            <Pane $p="4px 5px 0 5px">
              <Text as="div">Aftermarket Full.wav</Text>
              <Text as="div" $t={3}>44.1 kHz 16 Bit 2 Ch</Text>
              <Stack $t={6}><PillBtn $w={29}>Edit</PillBtn><PillBtn $w={30}>Save</PillBtn><PillBtn $w={29}>Rev.</PillBtn></Stack>
              <Stack $t={4}><Toggle $w={29} $on>HiQ</Toggle><Toggle $w={30} $on>Fade</Toggle><Toggle $w={29}>RAM</Toggle></Stack>
              <PitchRow>
                <PitchCol>
                  <Text as="span" $t={5}>Transpose</Text>
                  <PanKnob />
                  <Text as="span" $t={-2}>0 st</Text>
                  <Text as="span" $t={10}>Detune</Text>
                  <Stack $t={3}><NumBox $w={47} aria-label="Detune" defaultValue="0 ct" /></Stack>
                </PitchCol>
                <GainCol>
                  <svg width="24" height="72"><path d="M4.5 0V71" stroke="#0a0d12" strokeWidth="3" /><path d="M15 32.5V41.5L7 37Z" fill="#a6a3b0" stroke="#262a33" /></svg>
                  <NumText as="span" $t={5}>3.31 dB</NumText>
                </GainCol>
              </PitchRow>
            </Pane>
            <Pane $p="4px 5px 0 5px">
              <Toggle $on>Warp</Toggle>
              <Text htmlFor="bpm" $t={24}>Seg. BPM</Text>
              <Stack $t={2}><NumBox id="bpm" defaultValue="112.01" /></Stack>
              <Stack $t={5}><PillBtn $w={22}>:2</PillBtn><PillBtn $w={22}>*2</PillBtn></Stack>
              <SelectBox $top={8}><BareSelect aria-label="Warp mode" defaultValue="Tones"><option>Tones</option></BareSelect><Down /></SelectBox>
              <Center>
                <Text as="span" $t={8}>Grain Size</Text>
                <svg width="28" height="26" viewBox="0 0 28 28"><path d={`M${at(213, 12.3)}A12.3 12.3 0 0 1 ${at(262, 12.3)}`} fill="none" stroke="#e3a83c" strokeWidth="2" /><path d={`M${at(270, 12.3)}A12.3 12.3 0 1 1 ${at(147, 12.3)}M1.7 14H14`} fill="none" stroke="#0c1117" strokeWidth="2" /></svg>
                <NumText as="span" $t={-2}>30.00</NumText>
              </Center>
            </Pane>
            <Pane $p="4px 5px 0 4px">
              <SetRow label="Start" />
              <Nums label="Start" v={['1', '1', '1']} />
              <SetRow label="End" t={4} />
              <Nums label="End" v={['112', '2', '3']} bg="#959eac" />
              <Rule />
              <Toggle $on>Loop</Toggle>
              <SetRow label="Position" t={4} />
              <Nums label="Position" v={['2', '1', '1']} />
              <SetRow label="Length" t={4} />
              <Nums label="Length" v={['2', '0', '0']} />
            </Pane>
          </SampleBody>
        </SampleCol>

        <Wave>
          <Ruler>
            {beats.map((b, i) => <Beat key={b} $half={i === 15}><Tick />{b}</Beat>)}
          </Ruler>
          <Lane $h={11}>
            <Brace>
              <svg width="9" height="9"><path d="M1 1L8 4.5L1 8" fill="none" stroke="#222" /></svg>
              <svg width="9" height="9"><path d="M8 1L1 4.5L8 8" fill="none" stroke="#222" /></svg>
            </Brace>
          </Lane>
          <Lane $h={11}><svg width="10" height="10"><path d="M.5 0V10M.5 1L9 5L.5 9" fill="none" stroke="#222" /></svg></Lane>
          <Lane $h={14} $bg="#757d88"><Marker $col={1} $cut /><Marker $col={9} /><Marker $col={25} /></Lane>
          <Lane $h={5} $bg="#6a707b"><Orange /></Lane>
          <WaveForm />
          <Overlay><LoopEdges /></Overlay>
          <GridText>1/8</GridText>
        </Wave>
      </ClipView>

      <Status>
        <Lowered><RoundBtn aria-label="Show info"><svg width="12" height="12"><path d="M1 0L12 6L1 12Z" fill="#000" /></svg></RoundBtn></Lowered>
        <PathBox>/Users/adamberkowitz/Music/Ableton/Lowenstern Edit Project/Samples/Processed/Crop/Aftermarket Full.wav</PathBox>
        <OverviewTab>
          <svg width="205" height="20" viewBox="0 0 205 20">
            <rect width="197" height="20" fill="#7d8592" />
            <rect x="50" width="102" height="18" fill="#eceffb" />
            <g stroke="#16294a">
              <path d="M2 6H205" strokeWidth="3" />
              <path d="M2 14H205" strokeWidth="2" />
              <path d="M2 6H205" strokeWidth="5" strokeDasharray="26 4 17 3 9 12 22 5" />
              <path d="M8 14H205" strokeWidth="4" strokeDasharray="14 10 8 22 6 4 22 16 12 14" />
            </g>
            <rect x="1" y="1" width="195" height="18" fill="none" stroke="#000" strokeWidth="2" />
          </svg>
        </OverviewTab>
        <DeviceTab>
          3-Audio
          <svg width="42" height="17"><rect width="42" height="17" fill="#a3a9ab" /><rect width="42" height="4" fill="#e8dc2a" /><rect y="4" width="42" height="6" fill="#b5ae3c" /><path d="M2 7H12M20 7H38" stroke="#16170c" strokeWidth="5" strokeDasharray="6 1" /><path d="M16 13H34" stroke="#c3cf6a" strokeWidth="2" strokeDasharray="3 2" /></svg>
          <Plug>Pl</Plug>
        </DeviceTab>
        <Lowered><RoundBtn aria-label="Hide clip view"><svg width="12" height="11"><path d="M0 11H12L6 0Z" fill="#000" /></svg></RoundBtn></Lowered>
      </Status>
    </Page>
  );
}
